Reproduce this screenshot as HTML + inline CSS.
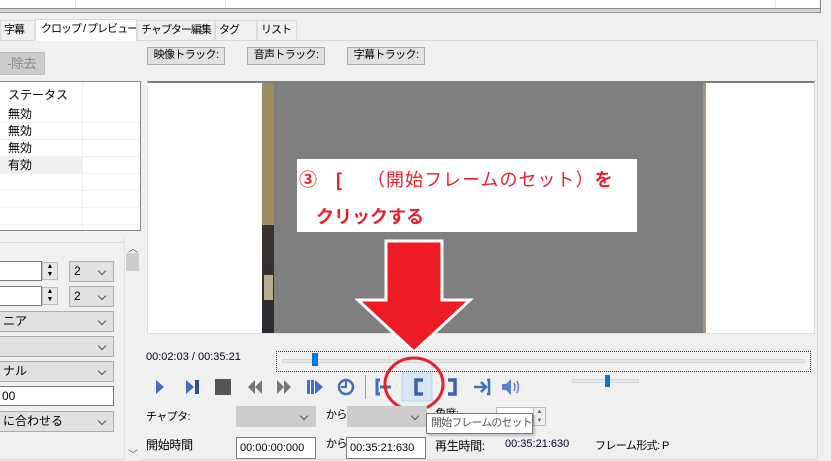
<!DOCTYPE html>
<html><head><meta charset="utf-8"><style>
*{margin:0;padding:0;box-sizing:border-box}
body{width:831px;height:460px;overflow:hidden;background:#f0f0f0;position:relative;font-family:"Liberation Sans","Noto Sans CJK JP",sans-serif;font-size:12px;color:#000;white-space:nowrap}
.a{position:absolute}
.n{font-size:11px;letter-spacing:-0.6px}
.btn{position:absolute;background:#e1e1e1;border:1px solid #adadad;text-align:center;line-height:15px;font-size:11px;letter-spacing:-0.6px}
.cb{position:absolute;background:#e1e1e1;border:1px solid #adadad;height:21px;line-height:19px;padding-left:4px}
.cb:after{content:"";position:absolute;right:8px;top:6px;width:5px;height:5px;border-right:1px solid #555;border-bottom:1px solid #555;transform:rotate(45deg)}
.tb{position:absolute;background:#fff;border:1px solid #7a7a7a;height:21px;line-height:19px;padding-left:3px}
.tab{position:absolute;top:20px;height:20px;border:1px solid #d9d9d9;border-bottom:none;background:#f0f0f0;line-height:19px;padding-left:3px;font-size:11px;letter-spacing:-1px;overflow:hidden}
.row{position:absolute;left:0;width:139px;height:17px;border-bottom:1px solid #f0f0f0;padding-left:8px;line-height:16px}
</style></head><body>
<div class="a" style="left:0;top:0;width:819px;height:9px;background:#fff"></div>
<div class="a" style="left:75px;top:0;width:1px;height:8px;background:#e5e5e5"></div>
<div class="a" style="left:225px;top:0;width:1px;height:8px;background:#e5e5e5"></div>
<div class="a" style="left:775px;top:0;width:1px;height:8px;background:#e5e5e5"></div>
<div class="a" style="left:0;top:8px;width:820px;height:5px;background:#d4d6d4;border-top:1px solid #8a8a8a;border-bottom:1px solid #9a9a9a"></div>
<div class="a" style="left:820px;top:0;width:1px;height:13px;background:#888"></div>
<div class="a" style="left:0;top:40px;width:818px;height:420px;background:#f0f0f0;border:1px solid #dadada;border-left:none"></div>
<div class="tab" style="left:0;width:35px">字幕</div>
<div class="tab" style="left:35px;top:19px;height:22px;width:102px;background:#fff;padding-left:5px">クロップ / プレビュー</div>
<div class="tab" style="left:137px;width:78px">チャプター編集</div>
<div class="tab" style="left:215px;width:42px">タグ</div>
<div class="tab" style="left:257px;width:40px">リスト</div>
<div class="btn" style="left:147px;top:47px;width:78px;height:18px">映像トラック:</div>
<div class="btn" style="left:247px;top:47px;width:78px;height:18px">音声トラック:</div>
<div class="btn" style="left:347px;top:47px;width:78px;height:18px">字幕トラック:</div>
<div class="btn" style="left:-2px;top:52px;width:47px;height:23px;line-height:21px;color:#8a8a8a;background:#ccc;border-color:#bfbfbf;font-size:13px">-除去</div>
<div class="a" style="left:0;top:81px;width:141px;height:150px;background:#fff;border:1px solid #828790;border-left:none">
<div class="a" style="left:0;top:0;width:140px;height:25px;padding-left:8px;line-height:26px">ステータス</div>
<div class="a" style="left:82px;top:0;width:1px;height:147px;background:#f0f0f0"></div>
<div class="row" style="top:24px">無効</div>
<div class="row" style="top:41px">無効</div>
<div class="row" style="top:58px">無効</div>
<div class="row" style="top:75px;background:linear-gradient(90deg,#efefef 83px,#fff 83px)">有効</div>
<div class="row" style="top:92px"></div><div class="row" style="top:109px"></div><div class="row" style="top:126px"></div>
</div>
<div class="a" style="left:0;top:242px;width:124px;height:1px;background:#dcdcdc"></div>
<div class="a" style="left:124px;top:236px;width:17px;height:224px;background:#f0f0f0;border-left:1px solid #e3e3e3"></div>
<div class="a" style="left:128px;top:240px;font-size:10px;color:#555">︿</div>
<div class="a" style="left:126px;top:253px;width:13px;height:18px;background:#cdcdcd"></div>
<div class="a" style="left:128px;top:446px;font-size:10px;color:#555">﹀</div>
<div class="tb" style="left:-2px;top:261px;width:44px;height:20px"></div>
<div class="a" style="left:42px;top:262px;width:16px;height:18px;background:#e6e6e6;border:1px solid #bbb;font-size:7px;line-height:8px;text-align:center">▲<br>▼</div>
<div class="cb" style="left:69px;top:261px;width:45px">2</div>
<div class="tb" style="left:-2px;top:286px;width:44px;height:20px"></div>
<div class="a" style="left:42px;top:287px;width:16px;height:18px;background:#e6e6e6;border:1px solid #bbb;font-size:7px;line-height:8px;text-align:center">▲<br>▼</div>
<div class="cb" style="left:69px;top:286px;width:45px">2</div>
<div class="cb" style="left:-2px;top:311px;width:116px">ニア</div>
<div class="cb" style="left:-2px;top:336px;width:116px"></div>
<div class="cb" style="left:-2px;top:361px;width:116px">ナル</div>
<div class="tb" style="left:-2px;top:386px;width:116px;height:20px">00</div>
<div class="cb" style="left:-2px;top:411px;width:116px">に合わせる</div>
<div class="a" style="left:147px;top:81px;width:668px;height:253px;background:#fff;border:1px solid #ddd;border-top:2px solid #808080"></div>
<div class="a" style="left:262px;top:83px;width:444px;height:250px;background:#7f7f7f"></div>
<div class="a" style="left:262px;top:83px;width:12px;height:250px;background:#9c8e62"></div>
<div class="a" style="left:262px;top:225px;width:12px;height:108px;background:linear-gradient(#3a3530,#2a2a30)"></div>
<div class="a" style="left:264px;top:275px;width:9px;height:25px;background:#b9ab90"></div>
<div class="a" style="left:703px;top:83px;width:3px;height:250px;background:#a59a75"></div>
<div class="a" style="left:297px;top:159px;width:340px;height:73px;background:#fff"></div>
<div class="a" style="left:299px;top:166px;color:#e8202a;font-size:18px;letter-spacing:1px"><b>③</b>&nbsp;&nbsp;&nbsp;<b>[</b>&nbsp;&nbsp;&nbsp;&nbsp;（開始フレームのセット）<b>を</b></div>
<div class="a" style="left:316px;top:203px;color:#e8202a;font-size:18px;font-weight:bold">クリックする</div>
<svg class="a" style="left:350px;top:235px" width="130" height="120"><polygon points="36,6 92,6 92,65 120,65 64,117 8,65 36,65" fill="#ed1c24" stroke="#fff" stroke-width="3"/></svg>
<div class="a" style="left:146px;top:351px;font-size:11px;color:#000033">00:02:03 / 00:35:21</div>
<div class="a" style="left:276px;top:351px;width:535px;height:21px;border:1px dotted #333"></div>
<div class="a" style="left:282px;top:359px;width:523px;height:4px;background:#e7e7e7;border:1px solid #d6d6d6"></div>
<div class="a" style="left:312px;top:353px;width:6px;height:13px;background:#0078d7"></div>
<svg class="a" style="left:140px;top:370px" width="400" height="36">
<rect x="262" y="3" width="30" height="28" fill="#d8e6f6" stroke="#b7d0ec"/>
<polygon points="16,10 24,17 16,24" fill="#3e6fc2"/>
<polygon points="46,10 54,17 46,24" fill="#3e6fc2"/><rect x="55" y="10" width="4" height="14" fill="#2a4f9a"/>
<rect x="75" y="9" width="16" height="16" fill="#555"/>
<polygon points="115,10 108,17 115,24" fill="#777"/><polygon points="122,10 115,17 122,24" fill="#777"/>
<polygon points="137,10 144,17 137,24" fill="#777"/><polygon points="144,10 151,17 144,24" fill="#777"/>
<rect x="167" y="10" width="3" height="14" fill="#3e6fc2"/><rect x="171" y="10" width="3" height="14" fill="#3e6fc2"/><polygon points="175,10 183,17 175,24" fill="#3e6fc2"/>
<circle cx="206" cy="17" r="7" fill="none" stroke="#3e6fc2" stroke-width="2.5"/><path d="M206 11v6h-5" stroke="#3e6fc2" stroke-width="2" fill="none"/>
<rect x="225" y="5" width="1" height="24" fill="#999"/>
<path d="M240 10h-3v14h3M240 17h11" stroke="#3e6fc2" stroke-width="3" fill="none"/>
<path d="M283 10h-7v14h7" stroke="#3a60b0" stroke-width="3.5" fill="none"/>
<path d="M308 10h7v14h-7" stroke="#3a60b0" stroke-width="3.5" fill="none"/>
<path d="M334 17h11M341 12l5 5-5 5M347 10h2v14h-2" stroke="#3e6fc2" stroke-width="2.5" fill="none"/>
<polygon points="362,14 366,14 371,9 371,25 366,20 362,20" fill="#5b82c8"/><path d="M374 13q2 4 0 8M377 11q3 6 0 12" stroke="#5b82c8" stroke-width="1.5" fill="none"/>
</svg>
<svg class="a" style="left:382px;top:355px" width="65" height="60"><ellipse cx="32" cy="29" rx="29" ry="26" fill="none" stroke="#e8202a" stroke-width="3"/></svg>
<div class="a" style="left:572px;top:379px;width:67px;height:4px;background:#e7e7e7;border:1px solid #d6d6d6"></div>
<div class="a" style="left:605px;top:375px;width:5px;height:12px;background:#0078d7"></div>
<div class="a n" style="left:146px;top:408px">チャプタ:</div>
<div class="cb" style="left:236px;top:406px;width:80px;border-color:#ccc;background:#ccc"></div>
<div class="a n" style="left:326px;top:406px">から</div>
<div class="cb" style="left:347px;top:406px;width:80px;border-color:#ccc;background:#ccc"></div>
<div class="a n" style="left:435px;top:405px">角度:</div>
<div class="tb" style="left:496px;top:407px;width:38px;height:19px;border-color:#bbb"></div>
<div class="a" style="left:533px;top:407px;width:13px;height:19px;border:1px solid #bbb;font-size:6px;line-height:9px;text-align:center;color:#666">▲<br>▼</div>
<div class="a" style="left:426px;top:413px;width:107px;height:21px;background:#fff;border:1px solid #767676;color:#575757;padding-left:4px;line-height:19px;font-size:11px;letter-spacing:-0.9px;box-shadow:2px 2px 2px rgba(0,0,0,.2)">開始フレームのセット</div>
<div class="a" style="left:146px;top:436px;font-size:12px;letter-spacing:-0.3px">開始時間</div>
<div class="tb" style="left:236px;top:437px;width:80px;height:22px;font-size:11px;line-height:20px">00:00:00:000</div>
<div class="a n" style="left:326px;top:435px">から</div>
<div class="tb" style="left:346px;top:437px;width:80px;height:22px;font-size:11px;line-height:20px">00:35:21:630</div>
<div class="a" style="left:435px;top:437px;font-size:12px;letter-spacing:-0.3px;background:#f0f0f0">再生時間:</div>
<div class="a" style="left:505px;top:438px;font-size:11px;color:#000033">00:35:21:630</div>
<div class="a n" style="left:595px;top:437px">フレーム形式: P</div>
<div class="a" style="left:822px;top:0;width:9px;height:460px;background:#f0f0f0"></div>
</body></html>
